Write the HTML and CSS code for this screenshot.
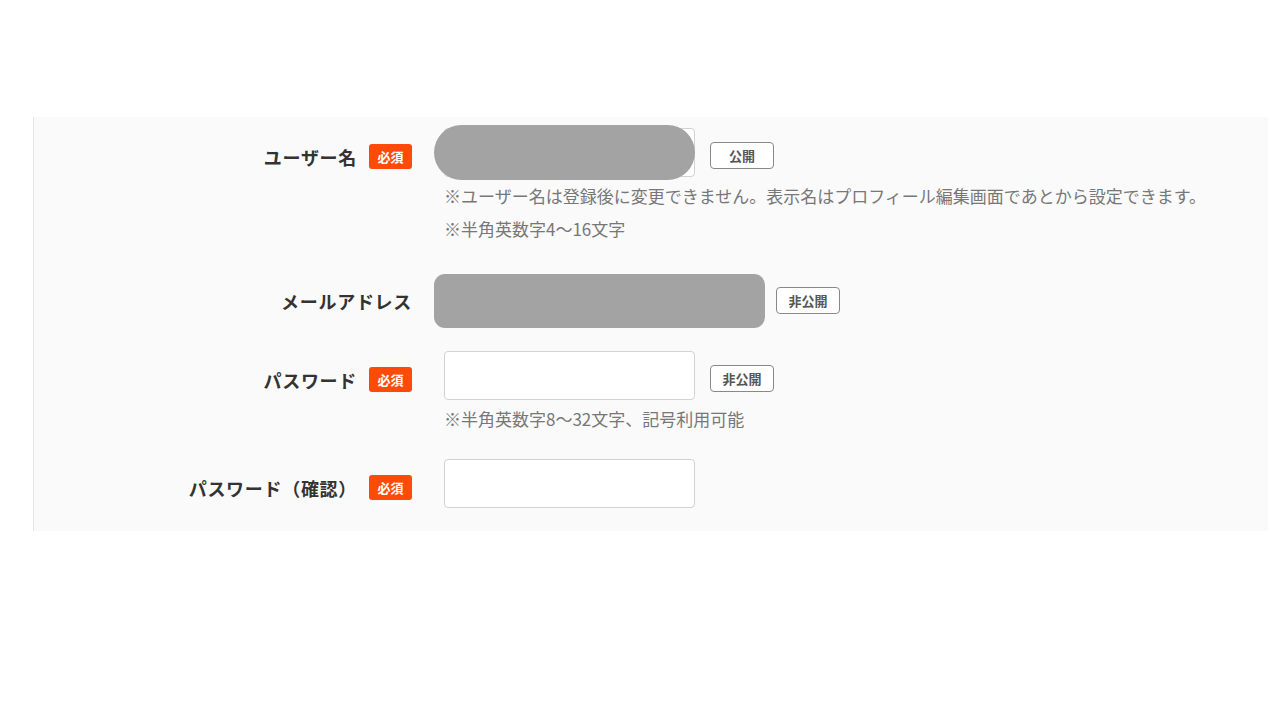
FILE: index.html
```html
<!DOCTYPE html>
<html lang="ja">
<head>
    <meta charset="UTF-8">
    <meta name="viewport" content="width=device-width, initial-scale=1.0">
    <title>会員登録</title>
    <link rel="stylesheet" href="styles.css">
</head>
<body>
    <div class="page">
        <form class="panel" onsubmit="return false">
            <div class="form-row">
                <div class="label-cell">
                    <label for="username">ユーザー名</label>
                    <span class="required">必須</span>
                </div>
                <div class="field-cell">
                    <div class="field-line">
                        <div class="input-wrap">
                            <input type="text" id="username" class="text-input">
                            <span class="mask mask-pill"></span>
                        </div>
                        <span class="visibility">公開</span>
                    </div>
                    <div class="notes">
                        <p>※ユーザー名は登録後に変更できません。表示名はプロフィール編集画面であとから設定できます。</p>
                        <p>※半角英数字4〜16文字</p>
                    </div>
                </div>
            </div>

            <div class="form-row row-email">
                <div class="label-cell">
                    <label for="email">メールアドレス</label>
                </div>
                <div class="field-cell">
                    <div class="field-line">
                        <div class="input-wrap">
                            <input type="email" id="email" class="text-input wide">
                            <span class="mask mask-box"></span>
                        </div>
                        <span class="visibility">非公開</span>
                    </div>
                </div>
            </div>

            <div class="form-row">
                <div class="label-cell">
                    <label for="password">パスワード</label>
                    <span class="required">必須</span>
                </div>
                <div class="field-cell">
                    <div class="field-line">
                        <div class="input-wrap">
                            <input type="password" id="password" class="text-input">
                        </div>
                        <span class="visibility">非公開</span>
                    </div>
                    <div class="notes">
                        <p>※半角英数字8〜32文字、記号利用可能</p>
                    </div>
                </div>
            </div>

            <div class="form-row">
                <div class="label-cell">
                    <label for="password-confirm">パスワード（確認）</label>
                    <span class="required">必須</span>
                </div>
                <div class="field-cell">
                    <div class="field-line">
                        <div class="input-wrap">
                            <input type="password" id="password-confirm" class="text-input">
                        </div>
                    </div>
                </div>
            </div>
        </form>
    </div>
</body>
</html>
```

FILE: styles.css
```css
body {
    margin: 0;
    background-color: #fff;
    font-family: "Noto Sans CJK JP", "Noto Sans", sans-serif;
    color: #333;
}

.page {
    padding: 117px 12px 0 33px;
}

.panel {
    background-color: #fafafa;
    border-left: 1px solid #e6e6e6;
    padding: 11px 0 23px;
    display: flex;
    flex-direction: column;
    gap: 24px;
}

.form-row {
    display: grid;
    grid-template-columns: 378px 1fr;
    column-gap: 32px;
}

.row-email {
    margin: 7px 0 2px;
}

.label-cell {
    display: flex;
    justify-content: flex-end;
    align-items: center;
    gap: 12px;
    height: 49px;
    padding-top: 8px;
    box-sizing: border-box;
}

.row-email .label-cell {
    padding-top: 0;
}

.label-cell label {
    font-size: 18px;
    font-weight: bold;
    letter-spacing: 0.7px;
    color: #333;
}

.required {
    display: inline-flex;
    align-items: center;
    justify-content: center;
    width: 43px;
    height: 25px;
    background-color: #ff4a0a;
    color: #fff;
    border-radius: 3px;
    font-size: 13px;
    font-weight: bold;
}

.field-line {
    display: flex;
    align-items: center;
    gap: 15px;
}

.input-wrap {
    position: relative;
}

.text-input {
    display: block;
    width: 251px;
    height: 49px;
    border: 1px solid #d2d2d2;
    border-radius: 4px;
    background-color: #fff;
    box-sizing: border-box;
    padding: 0 10px;
    font-size: 16px;
}

.text-input.wide {
    width: 317px;
}

/* redacted values */
.mask {
    position: absolute;
    left: -10px;
    background-color: #a3a3a3;
}

.mask-pill {
    top: -3px;
    width: 261px;
    height: 55px;
    border-radius: 28px;
}

.mask-box {
    top: -2px;
    width: 331px;
    height: 54px;
    border-radius: 11px;
}

.visibility {
    display: inline-flex;
    align-items: center;
    justify-content: center;
    width: 64px;
    height: 27px;
    box-sizing: border-box;
    border: 1.5px solid #888;
    border-radius: 4px;
    background-color: #fff;
    color: #555;
    font-size: 13px;
    font-weight: bold;
    margin-top: 5px;
}

.row-email .visibility {
    margin-top: 0;
}

.notes {
    margin-top: 2px;
}

.notes p {
    margin: 0;
    font-size: 17px;
    line-height: 33px;
    color: #777;
    white-space: nowrap;
}
```
